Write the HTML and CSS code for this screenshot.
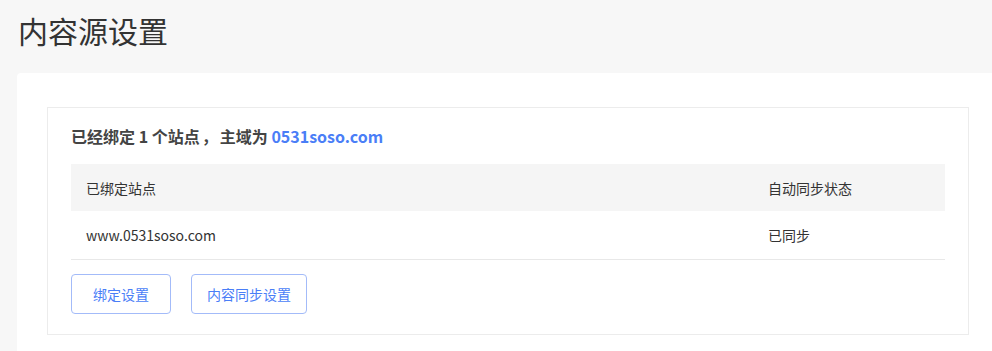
FILE: index.html
```html
<!DOCTYPE html>
<html lang="zh-CN">

<head>
    <meta charset="UTF-8">
    <meta name="viewport" content="width=device-width, initial-scale=1.0">
    <title>内容源设置</title>
    <link rel="stylesheet" href="styles.css">
</head>

<body>
    <div class="page">
        <h1 class="page-title">内容源设置</h1>
        <div class="card">
            <div class="panel">
                <h3 class="panel-title">已经绑定 1 个站点<span class="sep">，</span>主域为 <span class="domain">0531soso.com</span></h3>
                <table class="site-table">
                    <thead>
                        <tr>
                            <th>已绑定站点</th>
                            <th class="col-status">自动同步状态</th>
                        </tr>
                    </thead>
                    <tbody>
                        <tr>
                            <td>www.0531soso.com</td>
                            <td class="col-status">已同步</td>
                        </tr>
                    </tbody>
                </table>
                <div class="actions">
                    <button class="btn">绑定设置</button>
                    <button class="btn">内容同步设置</button>
                </div>
            </div>
        </div>
    </div>
</body>

</html>
```

FILE: styles.css
```css
* {
    margin: 0;
    padding: 0;
    box-sizing: border-box;
}

body {
    background-color: #f7f7f7;
    font-family: "Noto Sans CJK SC", "Noto Sans", sans-serif;
    color: #333;
    overflow: hidden;
}

.page {
    padding: 0 0 0 17px;
    width: 999px;
}

.page-title {
    font-size: 30px;
    font-weight: normal;
    line-height: 44px;
    padding: 8px 0 21px 1px;
    color: #333;
}

.card {
    background-color: #fff;
    border-radius: 4px;
    padding: 34px 30px 30px 30px;
}

.panel {
    border: 1px solid #ececec;
    padding: 16px 23px 20px 23px;
}

.panel-title {
    font-size: 16px;
    font-weight: bold;
    line-height: 24px;
    margin-bottom: 16px;
    color: #444;
}

.sep {
    margin: 0 2px;
}

.domain {
    color: #4a7ef7;
}

.site-table {
    width: 100%;
    border-collapse: collapse;
    font-size: 14px;
}

.site-table th {
    background-color: #f5f5f5;
    font-weight: normal;
    text-align: left;
    height: 47px;
    padding: 0 15px;
    color: #333;
}

.site-table td {
    height: 48px;
    padding: 0 15px;
    border-bottom: 1px solid #e8e8e8;
    color: #333;
}

.site-table .col-status {
    width: 192px;
}

.actions {
    display: flex;
    gap: 20px;
    margin-top: 14px;
}

.btn {
    height: 40px;
    min-width: 100px;
    padding: 0 15px;
    background-color: #fff;
    border: 1px solid #a3bbf9;
    border-radius: 4px;
    color: #4a7ef7;
    font-family: inherit;
    font-size: 14px;
    cursor: pointer;
}
```
